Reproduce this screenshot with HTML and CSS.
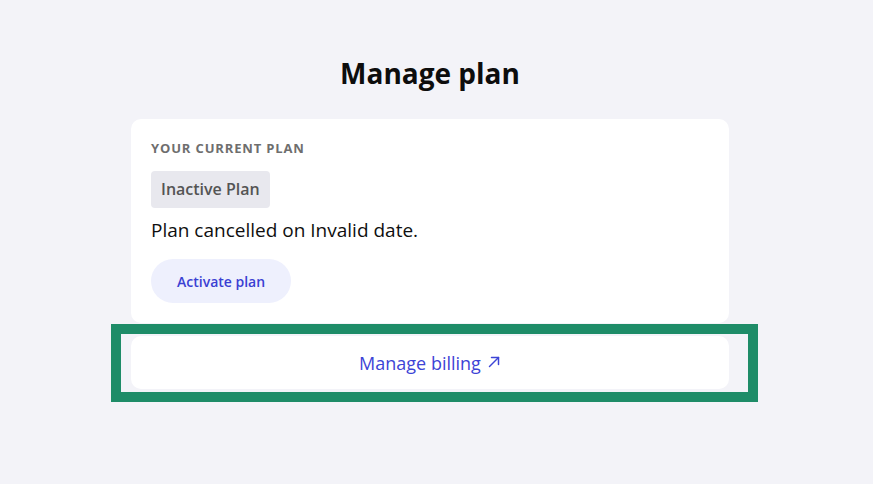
FILE: index.html
```html
<!DOCTYPE html>
<html lang="en">
<head>
<meta charset="utf-8">
<title>Manage plan</title>
<link rel="stylesheet" href="styles.css">
</head>
<body>
<main class="page">
  <h1 class="title">Manage plan</h1>
  <section class="card plan-card">
    <div class="label">YOUR CURRENT PLAN</div>
    <div class="badge">Inactive Plan</div>
    <p class="status">Plan cancelled on Invalid date.</p>
    <button class="activate" type="button">Activate plan</button>
  </section>
  <div class="highlight">
    <section class="card billing-card">
      <a class="billing-link" href="#">Manage billing
        <svg class="ext" width="14" height="14" viewBox="0 0 14 14" fill="none" stroke="currentColor" stroke-width="1.5" stroke-linecap="round" stroke-linejoin="round"><path d="M2.5 11.5 L11.5 2.5"/><path d="M4.5 2.5 H11.5 V9.5"/></svg>
      </a>
    </section>
  </div>
</main>
</body>
</html>
```

FILE: styles.css
```css
html, body {
  margin: 0;
  padding: 0;
  background: #f3f3f8;
}
body {
  font-family: "Open Sans", "Noto Sans", sans-serif;
  color: #111;
}
.page {
  width: 598px;
  margin: 0 0 0 131px;
  padding-top: 55px;
  display: flex;
  flex-direction: column;
}
.title {
  margin: 0 0 28px;
  text-align: center;
  font-size: 28px;
  line-height: 36px;
  font-weight: 700;
  color: #0d0d0d;
}
.card {
  background: #fff;
  border-radius: 10px;
}
.plan-card {
  padding: 20px;
  display: flex;
  flex-direction: column;
  align-items: flex-start;
}
.label {
  font-size: 13px;
  line-height: 18px;
  font-weight: 700;
  color: #6e6e6e;
  letter-spacing: 0.85px;
}
.badge {
  margin-top: 14px;
  height: 37px;
  line-height: 37px;
  padding: 0 10px;
  background: #e8e8ee;
  border-radius: 4px;
  font-size: 16px;
  font-weight: 600;
  color: #545454;
}
.status {
  margin: 10px 0 0;
  font-size: 19px;
  line-height: 24px;
  color: #0f0f0f;
}
.activate {
  margin-top: 17px;
  height: 44px;
  padding: 0 26px;
  border: none;
  border-radius: 22px;
  background: #eef0fd;
  color: #3a40d3;
  font-family: inherit;
  font-size: 14px;
  font-weight: 600;
}
.highlight {
  margin: 1px -29px 0 -20px;
  padding: 2px 19px 3px 10px;
  border: 10px solid #1e8c68;
}
.billing-card {
  height: 53px;
  display: flex;
  align-items: center;
  justify-content: center;
}
.billing-link {
  display: flex;
  align-items: center;
  gap: 6px;
  color: #3d44d6;
  text-decoration: none;
  font-size: 18px;
}
.ext {
  margin-bottom: 2px;
}
```
